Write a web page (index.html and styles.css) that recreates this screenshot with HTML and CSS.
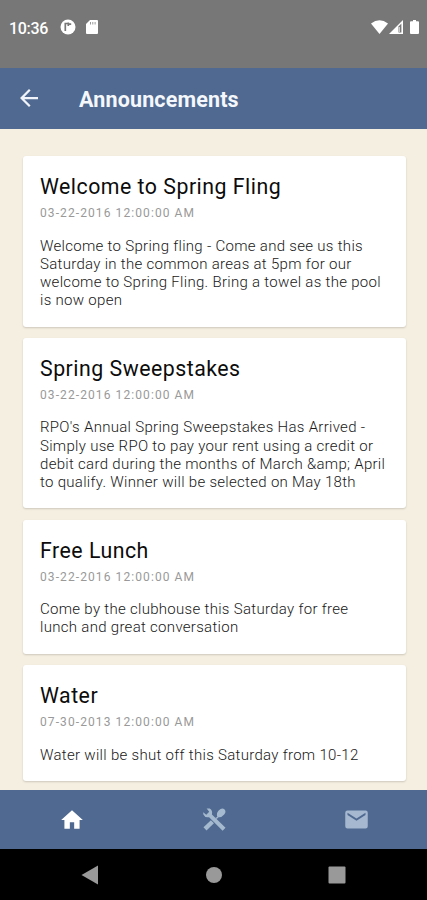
FILE: index.html
```html
<!DOCTYPE html>
<html lang="en">
<head>
<meta charset="utf-8">
<title>Announcements</title>
<link rel="stylesheet" href="styles.css">
</head>
<body>
<div class="status">
  <span class="time">10:36</span>
  <svg class="st-app" width="16" height="16" viewBox="0 0 16 16"><circle cx="8" cy="8" r="7.500" fill="#fff"/><path d="M5.300 12V4.500h3M8.300 3.500v3.500M8 5.200h3.200" fill="none" stroke="#777" stroke-width="1.700"/></svg>
  <svg class="st-sd" width="12" height="14" viewBox="0 0 12 14"><path d="M4 0h7q1 0 1 1v12q0 1-1 1H1q-1 0-1-1V4z" fill="#fff"/><path d="M4.500 2v2.500M6.800 2v2.500M9.100 2v2.500" stroke="#999" stroke-width="1"/></svg>
  <div class="status-right">
    <svg width="17" height="14" viewBox="0 0 17 14"><path d="M0 3.500Q8.500-3 17 3.500L8.500 14z" fill="#fff"/></svg>
    <svg width="14" height="14" viewBox="0 0 14 14"><path d="M0 14L14 0v14z" fill="#fff"/><path d="M9.500 6.500L12.400 3.600v8.900H9.500z" fill="#777"/><path d="M10.500 7v5" stroke="#ccc" stroke-width="1"/></svg>
    <svg class="st-bat" width="9" height="14" viewBox="0 0 9 14"><path d="M3 0h3v1.200h2q1 0 1 1V13q0 1-1 1H1q-1 0-1-1V2.200q0-1 1-1h2z" fill="#fff"/></svg>
  </div>
</div>
<header class="bar">
  <svg class="back" width="18" height="18" viewBox="4 4 16 16"><path d="M20 11H7.830l5.590-5.590L12 4l-8 8 8 8 1.410-1.410L7.830 13H20v-2z" fill="#f0f4fa"/></svg>
  <h1>Announcements</h1>
</header>
<main class="list">
  <article class="card">
    <h2>Welcome to Spring Fling</h2>
    <time>03-22-2016 12:00:00 AM</time>
    <p>Welcome to Spring fling - Come and see us this<br>Saturday in the common areas at 5pm for our<br>welcome to Spring Fling. Bring a towel as the pool<br>is now open</p>
  </article>
  <article class="card">
    <h2>Spring Sweepstakes</h2>
    <time>03-22-2016 12:00:00 AM</time>
    <p>RPO's Annual Spring Sweepstakes Has Arrived -<br>Simply use RPO to pay your rent using a credit or<br>debit card during the months of March &amp;amp; April<br>to qualify. Winner will be selected on May 18th</p>
  </article>
  <article class="card">
    <h2>Free Lunch</h2>
    <time>03-22-2016 12:00:00 AM</time>
    <p>Come by the clubhouse this Saturday for free<br>lunch and great conversation</p>
  </article>
  <article class="card">
    <h2>Water</h2>
    <time>07-30-2013 12:00:00 AM</time>
    <p>Water will be shut off this Saturday from 10-12</p>
  </article>
</main>
<nav class="tabs">
  <div><svg width="26" height="26" viewBox="0 0 24 24"><path d="M10 20v-6h4v6h5v-8h3L12 3 2 12h3v8z" fill="#fff"/></svg></div>
  <div><svg width="27" height="27" viewBox="0 0 24 24" fill="#a6bacf"><path d="M2.200 18.900L8.800 12.600l2.700 2.700-6.600 6.500z"/><path d="M14.500 9.800q-1.200-3 1.200-5.700Q18.300 1.200 20.500 2.600 23 4.800 20.600 7.600q-2.500 2.900-5 2.400l-1.600 1.600-1.200-1.200z"/><path d="M7.700 2.300q2.900 1.700 2 5.200L21.800 19.300l-2.600 2.600L7.200 9.900Q3.600 10.700 2.100 7.500L1.900 5.500l2.800 2.200 2.600-2.500L5 2.300z"/></svg></div>
  <div><svg width="27" height="27" viewBox="0 0 24 24"><path d="M20 4H4a2 2 0 0 0-2 2v12a2 2 0 0 0 2 2h16a2 2 0 0 0 2-2V6a2 2 0 0 0-2-2zm0 4l-8 5-8-5V6l8 5 8-5z" fill="#a6b8d0"/></svg></div>
</nav>
<footer class="system">
  <svg width="18" height="20" viewBox="0 0 18 20"><path d="M17 .5v19L.5 10z" fill="#999"/></svg>
  <svg width="18" height="18" viewBox="0 0 18 18"><circle cx="9" cy="9" r="8" fill="#999"/></svg>
  <svg width="18" height="18" viewBox="0 0 18 18"><rect x=".5" y=".5" width="17" height="17" rx="1" fill="#999"/></svg>
</footer>
</body>
</html>
```
FILE: styles.css
```css
* { box-sizing: border-box; margin: 0; }
body { width: 427px; height: 900px; overflow: hidden; display: flex; flex-direction: column; background: #f5efe1; font-family: Roboto, sans-serif; color: #181818; }
svg { display: block; flex: none; }
.status { height: 68px; flex: none; background: #777; display: flex; align-items: flex-start; padding: 19px 8px 0 9px; color: #fff; }
.time { font-size: 16px; line-height: 19px; font-weight: 500; width: 51px; letter-spacing: -.3px; }
.st-sd { margin: 1px 0 0 10px; }
.status-right { margin-left: auto; display: flex; gap: 1px; padding-top: 1px; }
.st-bat { margin-left: 6px; }
.bar { height: 61px; flex: none; background: #4f6990; display: flex; align-items: center; padding: 1px 20px 0; color: #f4f7fb; }
.bar .back { margin-top: -2px; }
.bar h1 { margin-left: 41px; padding-top: 1px; font-size: 21.500px; line-height: 26px; font-weight: 700; letter-spacing: .15px; }
.list { flex: 1; min-height: 0; padding: 27px 21px 0 23px; display: flex; flex-direction: column; gap: 11.300px; }
.card { background: #fff; border-radius: 3px; padding: 17px 17px 17px; box-shadow: 0 1px 2px rgba(0,0,0,.17); }
.card h2 { font-size: 21.300px; line-height: 28px; font-weight: 400; letter-spacing: .5px; white-space: nowrap; color: #0c0c0c; }
.card time { display: block; font-size: 12px; line-height: 16px; margin-top: 4.300px; letter-spacing: 1.090px; color: #999; }
.card p { font-size: 15px; line-height: 18.200px; margin-top: 15.400px; letter-spacing: .3px; font-weight: 300; white-space: nowrap; }
.tabs { height: 59px; flex: none; background: #4f6990; display: grid; grid-template-columns: repeat(3, 1fr); place-items: center; padding-left: 1px; }
.system { height: 51px; flex: none; background: #000; display: flex; align-items: center; justify-content: space-between; padding: 0 81px; }
```
